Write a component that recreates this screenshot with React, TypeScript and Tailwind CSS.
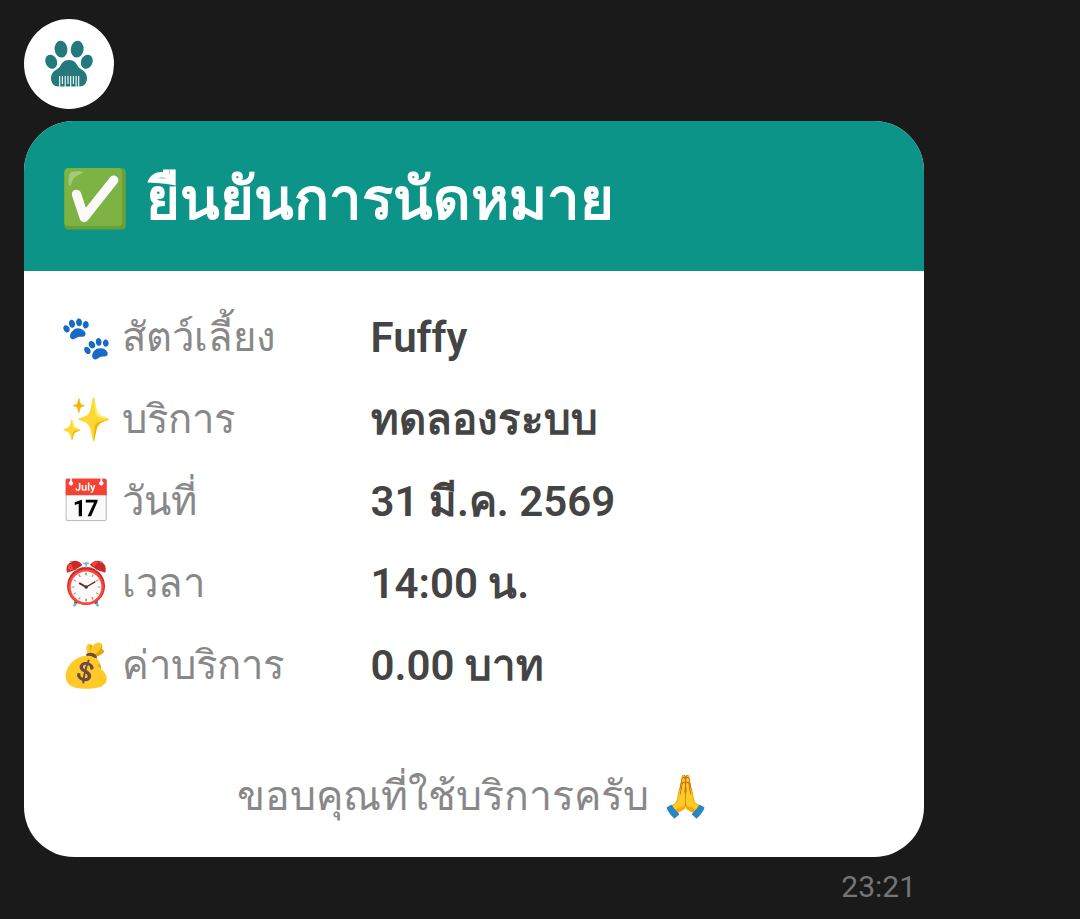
type Detail = { icon: string; label: string; value: string };

const details: Detail[] = [
  { icon: '🐾', label: 'สัตว์เลี้ยง', value: 'Fuffy' },
  { icon: '✨', label: 'บริการ', value: 'ทดลองระบบ' },
  { icon: '📅', label: 'วันที่', value: '31 มี.ค. 2569' },
  { icon: '⏰', label: 'เวลา', value: '14:00 น.' },
  { icon: '💰', label: 'ค่าบริการ', value: '0.00 บาท' },
];

function PawLogo() {
  return (
    <svg viewBox="0 0 90 90" className="size-full" role="img" aria-label="Pet grooming">
      <g fill="#23797b">
        <ellipse cx="37" cy="30.200" rx="6.400" ry="8.400" transform="rotate(-6 37 30.200)" />
        <ellipse cx="53.200" cy="30.200" rx="6.400" ry="8.400" transform="rotate(6 53.200 30.200)" />
        <ellipse cx="27.200" cy="42.700" rx="5.800" ry="7.200" transform="rotate(-22 27.200 42.700)" />
        <ellipse cx="62.800" cy="42.700" rx="5.800" ry="7.200" transform="rotate(22 62.800 42.700)" />
        <path d="M45 41c-5.500 0-7 3-9 6.500-1.500 2.800-9 4-9 11.500 0 5 3 8.500 7.500 8.500h21c4.500 0 7.500-3.500 7.500-8.500 0-7.500-7.500-8.700-9-11.500C52 44 50.500 41 45 41z" />
      </g>
      <path
        d="M35.700 57v11M38.400 57v8M41.200 57v11M44 57v8M46.700 57v11M49.400 57v8M52.100 57v11M54.700 57v11"
        stroke="#fff"
        strokeWidth="1.100"
      />
    </svg>
  );
}

export default function App() {
  return (
    <main className="min-h-screen bg-[#1a1a1a] px-6 pt-[19px] font-['Roboto','Liberation_Sans',sans-serif]">
      <div className="size-[90px] overflow-hidden rounded-full bg-white">
        <PawLogo />
      </div>

      <div className="mt-3 w-[calc(100%-132px)]">
        <article className="overflow-hidden rounded-[50px] bg-white">
          <header className="bg-[#0d9488] px-9 pt-[43px] pb-[37px]">
            <h1 className="flex items-center gap-4 text-[58px] leading-[70px] font-bold text-white">
              <span className="text-[56px]">✅</span>
              <span>ยืนยันการนัดหมาย</span>
            </h1>
          </header>

          <dl className="flex flex-col gap-5 px-9 pt-9">
            {details.map((d) => (
              <div key={d.label} className="grid grid-cols-[3fr_5fr] text-[42px] leading-[62px]">
                <dt className="flex items-center gap-2.5 whitespace-nowrap text-[#888888]">
                  <span>{d.icon}</span>
                  <span className="text-[40px]">{d.label}</span>
                </dt>
                <dd className="font-semibold text-[#444444]">{d.value}</dd>
              </div>
            ))}
          </dl>

          <p className="px-9 pt-[68px] pb-[30px] text-center text-[41px] leading-[62px] text-[#888888]">
            ขอบคุณที่ใช้บริการครับ 🙏
          </p>
        </article>
        <time className="mt-3 block pr-2 text-right text-[30px] leading-9 text-[#757575]">23:21</time>
      </div>
    </main>
  );
}
